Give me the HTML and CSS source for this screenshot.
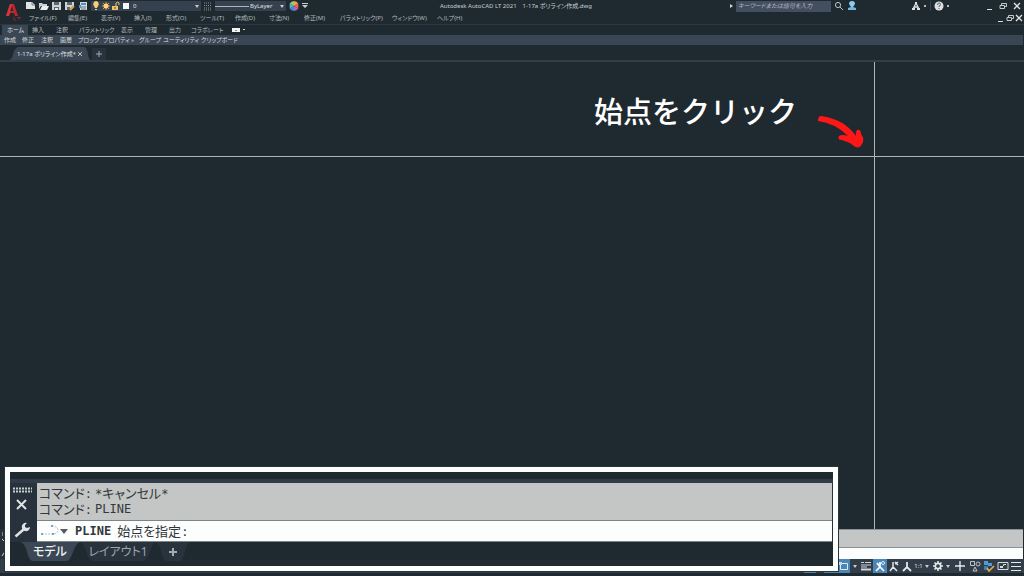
FILE: index.html
```html
<!DOCTYPE html>
<html lang="ja">
<head>
<meta charset="utf-8">
<title>Autodesk AutoCAD LT 2021</title>
<link rel="stylesheet" href="styles.css">
</head>
<body>
<div class="app">
  <header class="header">
    <button class="logo" aria-label="アプリケーション"><svg width="18" height="20" viewBox="0 0 18 20"><path d="M2 14 6 2h4l4 12h-3l-1-3H6l-1 3zM6 9h3L8 4z" fill="#bd262b"/><path d="M2 14 6 2h2L5 14z" fill="#d5363a"/><path d="M10 15v3h2M13 15.500h4M15 15v3" stroke="#8c292f" fill="none"/></svg></button>
    <div class="titlebar">
      <div class="quick">
        <button aria-label="新規"><svg class="ic" viewBox="0 0 10 10"><path d="M0 1h6l3 3v4H0z" fill="#dfe3e5"/><path d="M6 1v3h3" stroke="#76818a" fill="none"/></svg></button>
        <button aria-label="開く"><svg class="ic" viewBox="0 0 10 10"><path d="M0 2h3l1 1h4v2H2L0 8z" fill="#c9cfd2"/><path d="m1 9 2-4h7L8 9z" fill="#eceff0"/></svg></button>
        <button aria-label="保存"><svg class="ic" viewBox="0 0 10 10"><path d="M0 1h9v8H0z" fill="#cdd2d5"/><path d="M2 1h5v3H2zM2 6h5v3H2z" fill="#5d6870"/><path d="M3 7h3v2H3z" fill="#e5e8e9"/></svg></button>
        <button aria-label="名前を付けて保存"><svg class="ic" viewBox="0 0 10 10"><path d="M0 1h9v5L6 9H0z" fill="#cdd2d5"/><path d="M2 1h5v3H2zM2 6h3v3H2z" fill="#5d6870"/><path d="m5 9 4-4" stroke="#d79a42" stroke-width="2"/></svg></button>
        <button aria-label="印刷"><svg class="ic" viewBox="0 0 10 10"><path d="M2 1h7v8H2z" fill="#d4dadd"/><path d="M3 2h5v2H3z" fill="#4c91c4"/><path d="M3 6h5M3 8h5" stroke="#6a757d"/><path d="M1 4h2v3H1z" fill="#4c91c4"/></svg></button>
        <div class="combo layer">
          <svg class="ic" viewBox="0 0 10 10"><path d="M5 0a3 3 0 0 0-2 5l1 2h2l1-2a3 3 0 0 0-2-5z" fill="#f5cf74"/><path d="M4 8h2v1H4z" fill="#d8d9d4"/></svg>
          <svg class="ic" viewBox="0 0 10 10"><path d="M5 1v8M1 5h8M2 2l6 6M8 2 2 8" stroke="#d99b42"/><circle cx="5" cy="5" r="2.500" fill="#ffd477"/></svg>
          <svg class="ic" viewBox="0 0 10 10"><path d="M1 5h6v4H1z" fill="#f2c468"/><path d="M5 5V2q2-2 3 0v2" stroke="#f2c468" fill="none"/><path d="M4 6v2" stroke="#4a4537"/></svg>
          <svg class="ic" viewBox="0 0 10 10"><path d="M2 2h6v6H2z" fill="#f6f7f7"/></svg>
          <select aria-label="画層"><option>0</option></select>
          <i class="caret"></i>
        </div>
        <button aria-label="線種"><svg width="8" height="9" viewBox="0 0 8 9"><path d="M0 1h8M0 3.500h8M0 6h8M0 8h8" stroke="#89939a" stroke-dasharray="1 1"/></svg></button>
        <div class="combo ltype"><span class="line"></span><select aria-label="線の色"><option>ByLayer</option></select><i class="caret"></i></div>
        <button aria-label="カラー"><svg class="ic" viewBox="0 0 10 10"><path d="M5 5V0a5 5 0 0 1 4.300 2.500z" fill="#f0a24a"/><path d="m5 5 4.300-2.500v5z" fill="#e46a52"/><path d="M5 5l4.300 2.500A5 5 0 0 1 5 10z" fill="#b662b4"/><path d="M5 5v5A5 5 0 0 1 .7 7.500z" fill="#4e82d8"/><path d="M5 5 .7 7.500v-5z" fill="#51b6cf"/><path d="M5 5 .7 2.500A5 5 0 0 1 5 0z" fill="#9cc66a"/></svg></button>
        <button aria-label="カスタマイズ"><svg width="6" height="6" viewBox="0 0 6 6"><path d="M0 0h6v1H0zM0 2h6L3 5z" fill="#c8cdd0"/></svg></button>
      </div>
      <div class="doc-title"><span>Autodesk AutoCAD LT 2021</span><span>1-17a ポリライン作成.dwg</span></div>
      <div class="info">
        <i class="arrow-right"></i>
        <input class="search" type="text" aria-label="検索" placeholder="キーワードまたは語句を入力">
        <button aria-label="検索する"><svg class="ic" viewBox="0 0 10 10"><circle cx="4" cy="4" r="2.600" stroke="#b9c0c4" fill="none"/><path d="m6 6 3 3" stroke="#b9c0c4"/></svg></button>
        <button aria-label="サインイン"><svg class="ic" viewBox="0 0 10 10"><path d="M5 0q3 0 3 3L6 6H4L2 3q0-3 3-3z" fill="#8ccbf0"/><path d="M1 9V7l3-1h2l3 1v2z" fill="#70b7e2"/></svg></button>
        <button class="store" aria-label="アプリストア"><svg class="ic" viewBox="0 0 10 10"><path d="M5 2 2 8M5 2l3 6M3 6h4" stroke="#dfe2e4" stroke-width="1.300" fill="none"/><path d="M4 1h2v2H4zM1 7h3v2H1zM6 7h3v2H6z" fill="#dfe2e4"/></svg><i class="dot"></i></button>
        <button class="help" aria-label="ヘルプ"><svg class="ic" viewBox="0 0 10 10"><circle cx="5" cy="5" r="4.500" fill="#dfe2e4"/><path d="M3.500 4q0-2 1.500-2t1.500 1.500Q6.500 5 5 5v1M5 7v1" stroke="#566068" fill="none"/></svg><i class="dot"></i></button>
        <div class="win">
          <button aria-label="最小化"><svg class="w" viewBox="0 0 8 8"><path d="M2 7.500h5" stroke="#d8dcde"/></svg></button>
          <button aria-label="元に戻す"><svg class="w" viewBox="0 0 8 8"><path d="M2.500 3V1.500h5v3H6M1 3.500h4.500v3H1z" stroke="#c3c8cb" fill="none"/></svg></button>
          <button aria-label="閉じる"><svg class="w" viewBox="0 0 8 8"><path d="m1 1 6 6M7 1 1 7" stroke="#e2e5e7" stroke-width="1.300"/></svg></button>
        </div>
      </div>
    </div>
    <div class="menurow">
      <nav class="menu">
        <a href="#">ファイル(F)</a><a href="#">編集(E)</a><a href="#">表示(V)</a><a href="#">挿入(I)</a><a href="#">形式(O)</a><a href="#">ツール(T)</a><a href="#">作成(D)</a><a href="#">寸法(N)</a><a href="#">修正(M)</a><a href="#">パラメトリック(P)</a><a href="#">ウィンドウ(W)</a><a href="#">ヘルプ(H)</a>
      </nav>
      <div class="win docwin">
        <button aria-label="図面を最小化"><svg class="w" viewBox="0 0 8 8"><path d="M1 7.500h5" stroke="#d8dcde"/></svg></button>
        <button aria-label="図面を元に戻す"><svg class="w" viewBox="0 0 8 8"><path d="M2.500 3V1.500h5v3H6M1 3.500h4.500v3H1z" stroke="#c3c8cb" fill="none"/></svg></button>
        <button aria-label="図面を閉じる"><svg class="w" viewBox="0 0 8 8"><path d="m1 1 6 6M7 1 1 7" stroke="#e2e5e7" stroke-width="1.300"/></svg></button>
      </div>
    </div>
  </header>
  <nav class="ribbon">
    <a class="active" href="#">ホーム</a><a href="#">挿入</a><a href="#">注釈</a><a href="#">パラメトリック</a><a href="#">表示</a><a href="#">管理</a><a href="#">出力</a><a href="#">コラボレート</a><button aria-label="リボンの切替"><svg width="14" height="6" viewBox="0 0 14 6"><path d="M0 1h8v4H0z" fill="#f2f4f5"/><path d="m3 4 1-1 1 1z" fill="#27323a"/><path d="M11 2h2v1h-2z" fill="#cfd4d7"/></svg></button>
  </nav>
  <nav class="panels">
    <a href="#">作成</a><a href="#">修正</a><a href="#">注釈</a><a href="#">画層</a><a href="#">ブロック</a><a href="#">プロパティ</a><a href="#">»</a><a href="#">グループ</a><a href="#">ユーティリティ</a><a href="#">クリップボード</a>
  </nav>
  <div class="files">
    <div class="filetab"><svg class="tabshape" preserveAspectRatio="none" viewBox="0 0 84 14"><path d="M0 14Q4 14 5 8T10 0H76Q79 0 80 8T84 14z" fill="#3b4755"/></svg><span>1-17a ポリライン作成*</span><button aria-label="タブを閉じる"><svg width="6" height="6" viewBox="0 0 6 6"><path d="m1 1 4 4M5 1 1 5" stroke="#b9c0c5"/></svg></button></div>
    <button class="newtab" aria-label="新規タブ"><svg width="6" height="6" viewBox="0 0 6 6"><path d="M3 0v6M0 3h6" stroke="#a2abb1"/></svg></button>
  </div>
  <main class="canvas">
    <i class="cross-h"></i><i class="cross-v"></i>
    <p class="note">始点をクリック</p>
    <svg class="note-arrow" width="50" height="36" viewBox="0 0 50 36"><path d="M4 1Q1 1 1 6Q18 8 31 21Q25 19 22 21Q20 25 25 25Q32 27 37 31Q42 35 45 29Q48 24 44 19Q44 14 40 15Q38 18 39 21Q27 4 4 1Z" fill="#ff1717"/></svg>
  </main>
  <section class="dock">
    <div class="dock-side"><svg width="10" height="28" viewBox="0 0 10 28"><path d="M2 4h7M2 6h7" stroke="#cfd4d7" stroke-dasharray="1 1"/><path d="m2 10 3 3M2 27l4-6" stroke="#cfd4d7"/></svg></div>
    <div class="dock-body"><div class="dock-log"></div><div class="dock-line"></div></div>
  </section>
  <footer class="status">
    <button class="on" aria-label="直交モード"></button>
    <button aria-label="極トラッキング"></button>
    <button class="on" aria-label="スナップトラッキング"></button>
    <button class="on" aria-label="オブジェクトスナップ"><svg class="s" viewBox="0 0 12 12"><path d="M2.500 3.500h7v6h-7z" stroke="#dcecf6" fill="none"/><path d="M1 2h3v3H1z" fill="#b7dcf3"/></svg></button>
    <button aria-label="スナップ設定"><i class="caret"></i></button>
    <button aria-label="線の太さ"><svg class="s" viewBox="0 0 12 12"><path d="M1 2.500h3M5 2.500h6M1 5h10M1 7h6" stroke="#d1d6d9"/><path d="M1 9.500h10" stroke="#d1d6d9" stroke-width="2"/></svg></button>
    <button class="on" aria-label="注釈オブジェクト"><svg class="s" viewBox="0 0 12 12"><path d="m2 11 4-4 4 4M6 2v6M3 3l3 4" stroke="#fff" stroke-width="1.700" fill="none"/><circle cx="9" cy="3" r="1.500" stroke="#d6ebf8" fill="none"/></svg></button>
    <button aria-label="自動尺度"><svg class="s" viewBox="0 0 12 12"><path d="m2 11 3-4 4 4M5 2v6M7 4l3-2M7 2l3 3" stroke="#e4e7e9" stroke-width="1.500" fill="none"/></svg></button>
    <button aria-label="注釈尺度"><svg class="s" viewBox="0 0 12 12"><path d="m2 11 4-4 4 4M6 2v6" stroke="#e4e7e9" stroke-width="1.800" fill="none"/></svg></button>
    <button class="scale" aria-label="尺度">1:1<i class="caret"></i></button>
    <button aria-label="ワークスペース"><svg class="s" viewBox="0 0 12 12"><path d="M6 1v10M1 6h10M2.500 2.500l7 7M9.500 2.500l-7 7" stroke="#e6e9ea" stroke-width="1.600"/><circle cx="6" cy="6" r="2.700" fill="#303b47" stroke="#e6e9ea" stroke-width="1.700"/></svg></button>
    <button aria-label="ワークスペース一覧"><i class="caret"></i></button>
    <button aria-label="注釈モニター"><svg class="s" viewBox="0 0 12 12"><path d="M6 1v10M1 6h10" stroke="#e6e9ea" stroke-width="1.400"/></svg></button>
    <button aria-label="選択表示"><svg class="s" viewBox="0 0 12 12"><path d="M1.500 1.500h4v4h-4zM6 7l2 4H4z" stroke="#bcc3c7" fill="none"/><circle cx="9" cy="4" r="2" stroke="#bcc3c7" fill="none"/></svg></button>
    <button aria-label="パフォーマンス"><svg class="s" viewBox="0 0 12 12"><path d="M1 1h4v4H1zM5 3h4v3H5z" fill="#4e9cd1"/><path d="M1 6h4v4H1z" fill="#3a7bb0"/><path d="m4 8 2 3 5-5" stroke="#e9ad42" stroke-width="1.600" fill="none"/></svg></button>
    <button aria-label="全画面"><svg class="s" viewBox="0 0 12 12"><path d="M1 2.500h10v7H1zM6.500 6V4.500H9" stroke="#d6dbde" fill="none"/><path d="M3 6h3v2H3z" fill="#d6dbde"/></svg></button>
    <button aria-label="カスタマイズ"><svg class="s" viewBox="0 0 12 12"><path d="M1 2.500h10M1 6.500h10M1 10.500h10" stroke="#e6e9ea"/></svg></button>
  </footer>
</div>
<section class="callout">
  <div class="cmd">
    <div class="cmd-tools">
      <svg width="19" height="7" viewBox="0 0 19 7"><path d="M0 1.500h19M0 4.500h19" stroke="#c8cdd0" stroke-width="2" stroke-dasharray="2 1"/></svg>
      <button aria-label="閉じる"><svg width="12" height="12" viewBox="0 0 12 12"><path d="m1 1 9 9M10 1l-9 9" stroke="#dfe3e5" stroke-width="2"/></svg></button>
      <button aria-label="カスタマイズ"><svg width="16" height="16" viewBox="0 0 16 16"><path d="m1.500 14.500 8-7" stroke="#dfe3e5" stroke-width="2.500"/><path d="M13 1a4 4 0 0 0-5 5q0 3 3 3a4 4 0 0 0 5-4l-3 1-2-1V3z" fill="#dfe3e5"/></svg></button>
    </div>
    <div class="cmd-body">
      <div class="cmd-log">
        <div class="log-row"><span>コマンド<b class="mono">:</b></span><span><b class="mono">*</b>キャンセル<b class="mono">*</b></span></div>
        <div class="log-row"><span>コマンド<b class="mono">:</b></span><span class="mono">PLINE</span></div>
      </div>
      <label class="cmd-input">
        <svg width="20" height="14" viewBox="0 0 20 14"><path d="M2 10h12q4-1 4-4t-5-4" stroke="#b9c3c9" stroke-dasharray="2 1" fill="none"/><path d="M1 9h2v2H1zM12 9h2v2h-2zM11 1h2v2h-2z" fill="#69abd6"/></svg>
        <i class="caret big"></i>
        <strong>PLINE</strong><span>始点を指定<b class="mono">:</b></span>
        <input type="text" aria-label="コマンド入力">
      </label>
    </div>
  </div>
  <nav class="layouts">
    <a class="active" href="#"><svg class="tabshape" preserveAspectRatio="none" viewBox="0 0 60 19"><path d="M0 0H60Q56 1 53 10T46 19H13Q9 19 7 10T0 0z" fill="#3b4755"/></svg><span>モデル</span></a>
    <a href="#"><svg class="tabshape" preserveAspectRatio="none" viewBox="0 0 60 19"><path d="M0 0H60Q57 1 55 10T49 19H10Q7 19 5 10T0 0z" fill="#28333d"/></svg><span>レイアウト1</span></a>
    <button aria-label="レイアウトを追加"><svg class="tabshape" preserveAspectRatio="none" viewBox="0 0 60 19"><path d="M0 0H60Q55 1 51 10T43 19H18Q12 19 9 10T0 0z" fill="#28333d"/></svg><svg class="plus" width="10" height="10" viewBox="0 0 10 10"><path d="M5 1v8M1 5h8" stroke="#a2abb0" stroke-width="2"/></svg></button>
  </nav>
</section>
</body>
</html>
```

FILE: styles.css
```css
* { box-sizing: border-box; }
body {
  margin: 0;
  background: #1f2a30;
  color: #b3babe;
  font: 6px/10px "Noto Sans", "Noto Sans CJK JP", sans-serif;
  font-feature-settings: "palt";
}
a { color: inherit; text-decoration: none; white-space: nowrap; }
button, input, select {
  margin: 0; padding: 0; border: 0; background: none;
  color: inherit; font: inherit; font-feature-settings: inherit;
  appearance: none;
}
button { display: flex; align-items: center; justify-content: center; }
svg { display: block; flex: none; }
.ic { width: 10px; height: 10px; }
.s { width: 12px; height: 12px; }
.w { width: 8px; height: 8px; }
.caret {
  flex: none; width: 0; height: 0;
  border: 2px solid transparent;
  border-top: 3px solid #c8cdd0;
  border-bottom: 0;
}
.caret.big { border-width: 5px 4px 0; border-top-color: #555c61; }
.arrow-right { border: 2px solid transparent; border-left: 3px solid #cfd4d7; border-right: 0; }
.dot { width: 2px; height: 2px; background: #b5bcc0; }

.app { display: flex; flex-direction: column; min-height: 100vh; }

.header {
  display: grid;
  grid-template-columns: 26px 1fr;
  grid-template-rows: 12px 12px;
  border-bottom: 1px solid #2b3742;
}
.logo { grid-row: span 2; }
.titlebar { display: grid; grid-template-columns: minmax(0, 1fr) auto minmax(0, 1fr); align-items: center; }
.quick { display: flex; align-items: center; gap: 3px; }
.combo { display: flex; align-items: center; height: 10px; background: #35414e; color: #dfe3e5; }
.combo select { flex: 1; min-width: 0; height: 10px; }
.layer { width: 110px; padding-right: 2px; }
.layer select { padding-left: 2px; }
.ltype { width: 71px; padding: 0 2px 0 0; gap: 1px; }
.ltype .line { width: 34px; height: 1px; background: #aeb6bb; }
.doc-title { display: flex; gap: 6px; margin-right: 18px; color: #c9ced1; white-space: nowrap; }
.info { display: flex; align-items: center; justify-content: flex-end; gap: 3px; }
.search { width: 95px; height: 11px; padding: 0 2px; background: #434f61; }
.search::placeholder { color: #b1b8c0; font-style: italic; opacity: 1; }
.info button { gap: 3px; }
.info .store { margin-left: 51px; padding-right: 4px; border-right: 1px solid #3a454d; }
.win { display: flex; gap: 6px; padding-right: 3px; }
.info .win { margin-left: 33px; }
.menurow { display: flex; justify-content: space-between; align-items: center; padding-left: 3px; }
.menu {
  display: grid; align-items: center;
  grid-template-columns: 39px 33px 33px 32px 34px 35px 34px 35px 36px 52px 45px 40px;
}
.docwin { gap: 1px; padding-right: 1px; }

.ribbon {
  display: grid; align-items: center; height: 10px;
  grid-template-columns: 26px 24px 23px 42px 24px 24px 22px 44px 16px;
  padding-left: 2px;
}
.ribbon a { padding-left: 4px; }
.ribbon .active { padding-left: 5px; background: #3a4653; color: #dfe3e5; }
.panels {
  display: grid; align-items: center; height: 10px;
  grid-template-columns: 18px 19px 19px 18px 25px 28px 8px 24px 38px 40px;
  padding-left: 4px;
  margin-right: 1px;
  background: #3a4653;
  color: #d3d8db;
}
.files { display: flex; align-items: flex-end; height: 17px; border-bottom: 2px solid #323e4a; }
.filetab {
  position: relative; display: flex; align-items: center; justify-content: space-between;
  width: 84px; height: 13px; margin-left: 8px; padding: 0 9px;
  color: #dfe3e5;
}
.filetab span, .filetab button { position: relative; }
.tabshape { position: absolute; inset: 0; width: 100%; height: 100%; }
.newtab { width: 14px; height: 12px; background: #28333d; }

.canvas { position: relative; flex: 1; }
.cross-h, .cross-v { position: absolute; background: #aeb4b7; }
.cross-h { left: 0; right: 0; top: 94px; height: 1px; }
.cross-v { top: 0; bottom: 0; left: 874px; width: 1px; }
.note {
  position: absolute; left: 594px; top: 27px; margin: 0;
  color: #fff; font: 500 29px/42px "Noto Sans CJK JP", sans-serif;
  font-feature-settings: normal; white-space: nowrap;
}
.note-arrow { position: absolute; left: 817px; top: 53px; }

.dock { display: flex; padding-right: 1px; }
.dock-side { width: 12px; background: #27323a; }
.dock-body { flex: 1; background: #fcfdfd; }
.dock-log { height: 19px; background: #c3c6c5; border-bottom: 1px solid #8b9194; border-top: 1px solid #8b9194; }
.dock-line { height: 11px; }

.status {
  display: grid; justify-content: end; align-items: center;
  grid-template-columns: 12px 8px 13px 13px 9px 14px 14px 13px 13px 17px 15px 6px 17px 14px 14px 14px 12px;
  height: 14px; padding-right: 2px; margin-bottom: 3px;
  background: #323d4a;
  color: #dfe3e5;
}
.status button { height: 14px; }
.status .on { background: #4c86b6; }
.status .scale { gap: 2px; }

.callout {
  position: absolute; left: 5px; right: 186px; bottom: 5px;
  padding: 7px 0 5px;
  background: #1f2a30;
  border: 5px solid #fdfefe;
  outline: 1px solid #29333a;
}
.cmd { display: flex; padding-right: 1px; border-top: 4px solid #303c47; background: #27323c; }
.cmd-tools { display: flex; flex-direction: column; align-items: center; width: 27px; padding: 4px 3px 0 0; gap: 5px; }
.cmd-tools button + button { margin-top: 6px; }
.cmd-body { flex: 1; color: #32383b; font-size: 13px; line-height: 16px; }
.cmd-log { padding: 2px 2px 3px; background: #c3c6c5; }
.log-row { display: grid; grid-template-columns: 56px 1fr; height: 16px; }
.mono { font: 12px/16px "DejaVu Sans Mono", monospace; }
.cmd-input { display: flex; align-items: center; height: 22px; padding-left: 3px; background: #fcfdfd; border: solid #7d8488; border-width: 1px 0; }
.cmd-input strong { margin: 0 6px 0 7px; font: bold 12px/16px "DejaVu Sans Mono", monospace; }
.cmd-input span { white-space: nowrap; }
.cmd-input input { flex: 1; min-width: 0; }
.layouts { display: flex; height: 19px; padding-left: 10px; font-size: 12px; line-height: 19px; }
.layouts a, .layouts button { position: relative; display: flex; align-items: center; justify-content: center; }
.layouts span, .plus { position: relative; }
.layouts a { width: 76px; color: #9da6ab; }
.layouts .active { width: 60px; color: #eef1f2; font-weight: 500; }
.layouts button { width: 34px; }
```
